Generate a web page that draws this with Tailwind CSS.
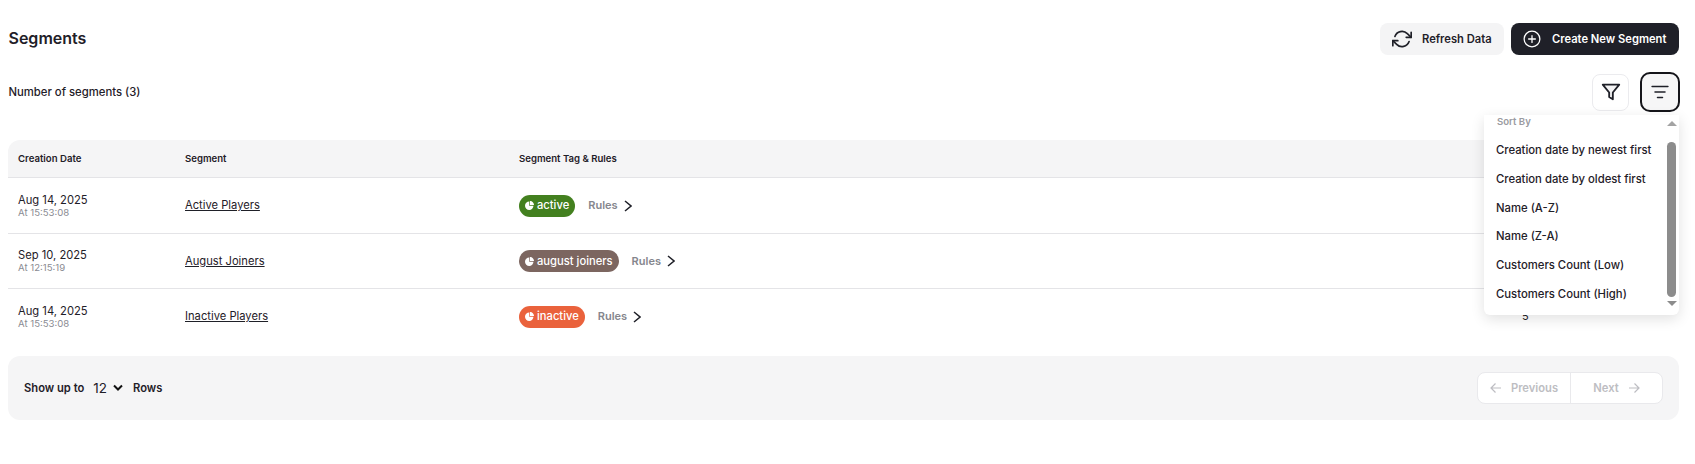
<!doctype html>
<html><head><meta charset="utf-8"><script src="https://cdn.jsdelivr.net/npm/@tailwindcss/browser@4"></script></head>
<body class="bg-white">
<div class="relative w-[1695px] h-[464px] overflow-hidden px-2 font-['Inter','sans-serif'] text-[#1f2028]">
  <div class="flex items-center justify-between pt-[23px] pr-2 h-[55px]">
    <h1 class="text-[16px] leading-6 font-semibold relative left-[0.5px] top-[-1px]">Segments</h1>
    <div class="flex gap-[7px]">
      <button class="flex items-center h-8 w-[124px] pl-[12px] rounded-lg bg-[#f4f4f5] text-[11.2px] font-semibold">
        <svg class="w-[20px] h-[20px] mr-[10px]" viewBox="0 0 24 24" fill="none" stroke="currentColor" stroke-width="2" stroke-linecap="round" stroke-linejoin="round"><path d="M23 4v6h-6"/><path d="M1 20v-6h6"/><path d="M3.5 9a9 9 0 0 1 14.9-3.4L23 10M1 14l4.6 4.4A9 9 0 0 0 20.5 15"/></svg>
        Refresh Data
      </button>
      <button class="flex items-center h-8 w-[168px] pl-[12px] rounded-lg bg-[#1f2028] text-white text-[11.2px] font-semibold">
        <svg class="w-[18px] h-[18px] mr-[11px]" viewBox="0 0 24 24" fill="none" stroke="currentColor" stroke-width="1.7" stroke-linecap="round"><circle cx="12" cy="12" r="10.5"/><path d="M12 7.5v9M7.5 12h9"/></svg>
        Create New Segment
      </button>
    </div>
  </div>
  <div class="flex items-center justify-between pr-[7px] mt-[17px] h-10">
    <p class="text-[11.3px] leading-4 font-medium relative left-[0.5px]">Number of segments (3)</p>
    <div class="flex items-center gap-[11px]">
      <button class="w-[37px] h-[37px] flex items-center justify-center rounded-lg border border-[#ebebee] bg-white">
        <svg class="w-[22px] h-[22px]" viewBox="0 0 24 24" fill="#f4f4f5" stroke="#1f2028" stroke-width="2" stroke-linejoin="round"><path d="M3 4h18l-7 8.5V20l-4-2.5v-5z"/></svg>
      </button>
      <button class="w-10 h-10 flex items-center justify-center rounded-[10px] border-2 border-[#15151a] bg-[#f6f6f7]">
        <svg class="w-[20px] h-[20px]" viewBox="0 0 24 24" fill="none" stroke="#1f2028" stroke-width="1.8" stroke-linecap="round"><path d="M2.5 5.5h19M6 12h12M9 18.5h6"/></svg>
      </button>
    </div>
  </div>
  <div class="mt-[28px] w-[1671px]">
    <div class="grid grid-cols-[177px_334px_1fr] items-center h-[38px] pt-[1px] bg-[#f5f5f6] rounded-t-xl border-b border-[#e4e4e7] text-[9.6px] font-semibold">
      <div class="pl-[10px]">Creation Date</div><div>Segment</div><div>Segment Tag &amp; Rules</div>
    </div>
    <div class="grid grid-cols-[177px_334px_1003px_1fr] items-center h-[56px] border-b border-[#e4e4e7]">
      <div class="pl-[10px]"><div class="text-[11.2px] leading-[14px]">Aug 14, 2025</div><div class="text-[9.6px] leading-3 text-[#8a8b92]">At 15:53:08</div></div>
      <a class="text-[11.2px] underline">Active Players</a>
      <div class="flex items-center"><span class="flex items-center gap-[3px] h-[22px] px-[6px] rounded-full bg-[#43801f] text-white text-[11.2px] font-medium"><svg class="w-[9px] h-[9px]" viewBox="0 0 16 16" fill="white"><path d="M7.5 1v7.5H15A7.5 7.5 0 1 1 7.5 1zM8.7 0A7 7 0 0 1 16 7.3H8.7z"/></svg>active</span><span class="ml-[13px] text-[11px] font-semibold text-[#85868d]">Rules</span><svg class="ml-[6px] w-2 h-3" viewBox="0 0 8 12" fill="none" stroke="#1f2028" stroke-width="1.5"><path d="M1 1l6 5-6 5"/></svg></div>
      <div></div>
    </div>
    <div class="grid grid-cols-[177px_334px_1003px_1fr] items-center h-[55px] border-b border-[#e4e4e7]">
      <div class="pl-[10px]"><div class="text-[11.2px] leading-[14px]">Sep 10, 2025</div><div class="text-[9.6px] leading-3 text-[#8a8b92]">At 12:15:19</div></div>
      <a class="text-[11.2px] underline">August Joiners</a>
      <div class="flex items-center"><span class="flex items-center gap-[3px] h-[22px] px-[6px] rounded-full bg-[#7c6660] text-white text-[11.2px] font-medium"><svg class="w-[9px] h-[9px]" viewBox="0 0 16 16" fill="white"><path d="M7.5 1v7.5H15A7.5 7.5 0 1 1 7.5 1zM8.7 0A7 7 0 0 1 16 7.3H8.7z"/></svg>august joiners</span><span class="ml-[13px] text-[11px] font-semibold text-[#85868d]">Rules</span><svg class="ml-[6px] w-2 h-3" viewBox="0 0 8 12" fill="none" stroke="#1f2028" stroke-width="1.5"><path d="M1 1l6 5-6 5"/></svg></div>
      <div></div>
    </div>
    <div class="grid grid-cols-[177px_334px_1003px_1fr] items-center h-[55px]">
      <div class="pl-[10px]"><div class="text-[11.2px] leading-[14px]">Aug 14, 2025</div><div class="text-[9.6px] leading-3 text-[#8a8b92]">At 15:53:08</div></div>
      <a class="text-[11.2px] underline">Inactive Players</a>
      <div class="flex items-center"><span class="flex items-center gap-[3px] h-[22px] px-[6px] rounded-full bg-[#ea623c] text-white text-[11.2px] font-medium"><svg class="w-[9px] h-[9px]" viewBox="0 0 16 16" fill="white"><path d="M7.5 1v7.5H15A7.5 7.5 0 1 1 7.5 1zM8.7 0A7 7 0 0 1 16 7.3H8.7z"/></svg>inactive</span><span class="ml-[13px] text-[11px] font-semibold text-[#85868d]">Rules</span><svg class="ml-[6px] w-2 h-3" viewBox="0 0 8 12" fill="none" stroke="#1f2028" stroke-width="1.5"><path d="M1 1l6 5-6 5"/></svg></div>
      <div class="text-[11px]">5</div>
    </div>
  </div>
  <div class="mt-[12px] w-[1671px] h-[64px] bg-[#f5f5f6] rounded-xl flex items-center justify-between pl-[16px] pr-4">
    <div class="flex items-center text-[11.2px] font-semibold">
      <span>Show up to</span>
      <span class="ml-[9px] text-[13.5px] font-normal">12</span>
      <svg class="ml-[6px] w-[10px] h-[8px]" viewBox="0 0 10 8" fill="none" stroke="#111" stroke-width="2"><path d="M1 1.5l4 4 4-4"/></svg>
      <span class="ml-[10px]">Rows</span>
    </div>
    <div class="flex h-8 w-[186px] rounded-lg border border-[#e9e9ec] bg-white text-[11.2px] font-semibold text-[#bdbdc2]">
      <div class="w-[93px] border-r border-[#e9e9ec] flex items-center justify-center gap-[9px]"><svg class="w-3 h-3" viewBox="0 0 12 12" fill="none" stroke="#bdbdc2" stroke-width="1.2"><path d="M11 6H1M5.5 1.5L1 6l4.5 4.5"/></svg>Previous</div>
      <div class="flex-1 flex items-center justify-center gap-[9px]">Next<svg class="w-3 h-3" viewBox="0 0 12 12" fill="none" stroke="#bdbdc2" stroke-width="1.2"><path d="M1 6h10M6.5 1.5L11 6l-4.5 4.5"/></svg></div>
    </div>
  </div>
  <div class="absolute left-[1484px] top-[115px] w-[195px] h-[200px] bg-white rounded-b-md shadow-[0_4px_14px_rgba(0,0,0,0.12)] overflow-hidden">
    <div class="absolute left-[13px] top-[1px] text-[9.6px] leading-[12px] font-semibold text-[#9a9ba1]">Sort By</div>
    <div class="absolute left-[12px] top-[21px] flex flex-col text-[11.3px] font-medium">
      <div class="h-[29px] flex items-center">Creation date by newest first</div>
      <div class="h-[29px] flex items-center">Creation date by oldest first</div>
      <div class="h-[28px] flex items-center">Name (A-Z)</div>
      <div class="h-[29px] flex items-center">Name (Z-A)</div>
      <div class="h-[29px] flex items-center">Customers Count (Low)</div>
      <div class="h-[29px] flex items-center">Customers Count (High)</div>
    </div>
    <div class="absolute right-0 top-0 bottom-0 w-[15px] flex flex-col items-center">
      <div class="mt-[6px] w-0 h-0 border-x-[5px] border-x-transparent border-b-[5px] border-b-[#a3a3a3]"></div>
      <div class="mt-[16px] w-[9px] h-[155px] rounded-full bg-[#8c8c8c]"></div>
      <div class="mt-[4px] w-0 h-0 border-x-[5px] border-x-transparent border-t-[5px] border-t-[#8c8c8c]"></div>
    </div>
  </div>
</div>
</body></html>
